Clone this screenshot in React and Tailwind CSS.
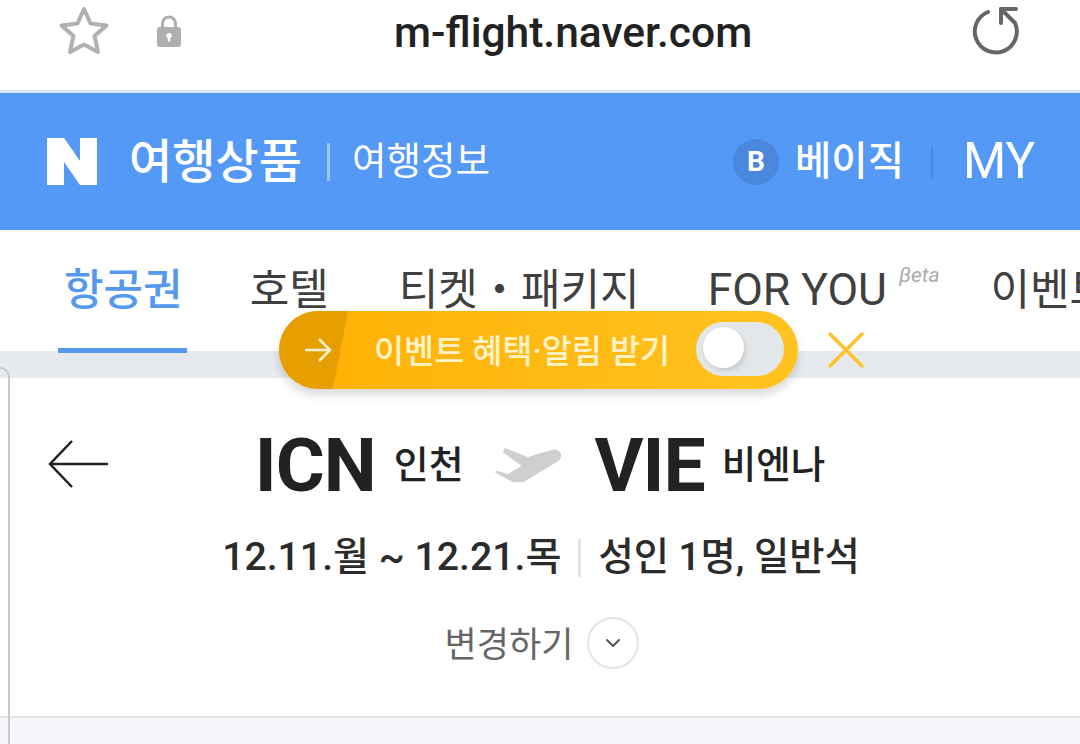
import { FiChevronDown } from 'react-icons/fi'

const fontStack = "font-['Roboto','Noto_Sans_CJK_KR',sans-serif]"

function StarIcon() {
  return (
    <svg width="52" height="52" viewBox="0 0 52 52" fill="none" stroke="#b0b0b0" strokeWidth="4" strokeLinejoin="round">
      <path d="M26 4 L32.5 18.5 L48.5 20.5 L36.5 31 L40 47 L26 39.5 L12 47 L15.5 31 L3.5 20.5 L19.5 18.5 Z" />
    </svg>
  )
}

function LockIcon() {
  return (
    <svg width="26" height="34" viewBox="0 0 26 34">
      <path d="M6.5 14 V9.5 a6.5 6.5 0 0 1 13 0 V14" fill="none" stroke="#aeaeae" strokeWidth="3" />
      <rect x="1" y="13" width="24" height="20" rx="3" fill="#aeaeae" />
      <circle cx="13" cy="21.5" r="2.6" fill="#fff" />
      <rect x="11.8" y="22" width="2.4" height="5.5" fill="#fff" />
    </svg>
  )
}

function ReloadIcon() {
  return (
    <svg width="50" height="50" viewBox="0 0 50 50" fill="none" stroke="#666" strokeWidth="4" strokeLinecap="round" strokeLinejoin="round">
      <path d="M18 6 A21 21 0 1 0 45 17 L31 3" />
      <path d="M46 3 H31 V17" />
    </svg>
  )
}

function NaverLogo() {
  return (
    <svg width="50" height="47" viewBox="0 0 50 47">
      <path d="M0 0 H17 L33 23 V0 H50 V47 H33 L17 24 V47 H0 Z" fill="#fff" />
    </svg>
  )
}

function PlaneIcon() {
  return (
    <svg width="68" height="38" viewBox="0 0 68 38">
      <path d="M10.7 2 L34 11 L57 4 Q64 2 67 8 Q67.5 12 65 14.7 L29 36.3 H19 L0.7 26.3 L2.3 24.7 L14 28 L27.3 19.7 L9 6.3 Z" fill="#cfcfcf" />
    </svg>
  )
}

function Tab({ label, active, className = 'text-[43px]', children }) {
  return (
    <div className={`flex h-full items-start pt-[33px] leading-[54px] ${className} ${active ? 'font-medium text-[#5599ee]' : 'text-[#404040]'}`}>
      {label}
      {children}
    </div>
  )
}

function EventPopup() {
  return (
    <div className="absolute left-[279px] top-[311px] flex items-center">
      <div className="relative flex h-[78px] w-[519px] items-center overflow-hidden rounded-full bg-gradient-to-r from-[#ffb000] to-[#ffc31f] shadow-[0_6px_10px_rgba(0,0,0,0.15)]">
        <div className="absolute inset-y-0 left-0 w-[69px] bg-[#e69e00] [clip-path:polygon(0_0,100%_0,78%_100%,0_100%)]" />
        <svg className="relative ml-[25px]" width="28" height="26" viewBox="0 0 28 26" fill="none" stroke="#fff3d0" strokeWidth="2.5">
          <path d="M1 13 H26 M15 2 L26 13 L15 24" />
        </svg>
        <span className="relative ml-[42px] mt-[5px] whitespace-nowrap text-[32.7px] font-medium leading-none text-[#fff3c8]">이벤트 혜택·알림 받기</span>
        <div className="absolute left-[417px] top-[11px] h-[54px] w-[88px] rounded-full bg-[#e4e7ea]">
          <div className="absolute left-[7px] top-[5px] h-[41px] w-[41px] rounded-full bg-white shadow-[2px_3px_5px_rgba(0,0,0,0.12)]" />
        </div>
      </div>
      <svg className="ml-[29px]" width="38" height="38" viewBox="0 0 38 38" stroke="#ffc229" strokeWidth="3.5" strokeLinecap="round">
        <path d="M3 3 L35 35 M35 3 L3 35" />
      </svg>
    </div>
  )
}

export default function App() {
  return (
    <div className={`relative h-[744px] w-[1080px] overflow-hidden bg-[#f5f6fa] ${fontStack}`}>
      {/* browser bar */}
      <div className="flex h-[93px] items-start border-b-[3px] border-[#dde4ec] bg-white">
        <div className="ml-[58px] mt-[5px]"><StarIcon /></div>
        <div className="ml-[46px] mt-[14px]"><LockIcon /></div>
        <div className="ml-[212px] mt-[12px] text-[42.5px] font-medium leading-none text-[#222]">m-flight.naver.com</div>
        <div className="ml-[218px] mt-[6px]"><ReloadIcon /></div>
      </div>

      {/* blue header */}
      <div className="flex h-[137px] items-center bg-[#5599f6] text-white">
        <div className="ml-[47px]"><NaverLogo /></div>
        <div className="ml-[32px] text-[47px] font-medium leading-none">여행상품</div>
        <div className="ml-[25px] h-[38px] w-[3px] bg-[#9cc4fa]" />
        <div className="ml-[22px] text-[37.5px] leading-none">여행정보</div>
        <div className="ml-[243px] flex h-[46px] w-[46px] items-center justify-center rounded-full bg-[#4a88de] text-[28px] font-bold">B</div>
        <div className="ml-[16px] text-[39.5px] font-medium leading-none">베이직</div>
        <div className="ml-[27px] h-[32px] w-[2px] bg-[#4a88de]" />
        <div className="ml-[30px] text-[49.5px] leading-none">MY</div>
      </div>

      {/* tabs */}
      <div className="relative flex h-[121px] whitespace-nowrap bg-white pl-[64px]">
        <Tab label="항공권" active />
        <Tab label="호텔" className="ml-[67px] text-[43px]" />
        <Tab label="티켓・패키지" className="ml-[70px] text-[43px]" />
        <Tab label="FOR YOU" className="ml-[68px] text-[44.5px]">
          <span className="ml-[12px] mt-[2px] text-[21px] italic leading-none text-[#aaa]">βeta</span>
        </Tab>
        <Tab label="이벤트" className="ml-[51px] text-[43px]" />
        <div className="absolute bottom-[-2px] left-[58px] h-[5px] w-[129px] bg-[#5599ee]" />
      </div>

      {/* grey band */}
      <div className="h-[27px] bg-[#e6eaef]" />

      {/* flight summary card */}
      <div className="relative h-[340px] border-b-2 border-[#e2e4e8] bg-white">
        <svg className="absolute left-[48px] top-[60px]" width="62" height="50" viewBox="0 0 62 50" fill="none" stroke="#222" strokeWidth="2.5">
          <path d="M2 26 H60 M24 3 L2 26 L24 49" />
        </svg>
        <div className="flex h-[160px] items-center justify-center pt-[15px]">
          <span className="text-[75px] font-bold leading-none tracking-[-1px] text-[#222]">ICN</span>
          <span className="ml-[18px] text-[38px] font-medium text-[#222]">인천</span>
          <div className="-mt-[2px] ml-[30px] mr-[33px]"><PlaneIcon /></div>
          <span className="text-[75px] font-bold leading-none tracking-[-1px] text-[#222]">VIE</span>
          <span className="ml-[17px] text-[37.5px] font-medium text-[#222]">비엔나</span>
        </div>
        <div className="flex items-center justify-center pl-[2px] leading-none text-[#2b2b2b]">
          <span className="text-[39.2px] font-medium">12.11.월 ~ 12.21.목</span>
          <div className="mx-[17px] h-[38px] w-[3px] bg-[#e4e4e4]" />
          <span className="text-[38.4px] font-medium">성인 1명, 일반석</span>
        </div>
        <div className="mt-[40px] flex items-center justify-center pl-[4px]">
          <span className="mt-[4px] text-[35px] leading-none text-[#666]">변경하기</span>
          <div className="ml-[14px] flex h-[52px] w-[52px] items-center justify-center rounded-full border-2 border-[#e2e4e6] text-[#555]">
            <FiChevronDown size={24} />
          </div>
        </div>
      </div>

      <EventPopup />

      {/* edge of the side panel */}
      <div className="absolute left-[-20px] top-[367px] h-[400px] w-[30px] rounded-tr-[10px] border-r-2 border-t-2 border-[#c8c8c8]" />
    </div>
  )
}
